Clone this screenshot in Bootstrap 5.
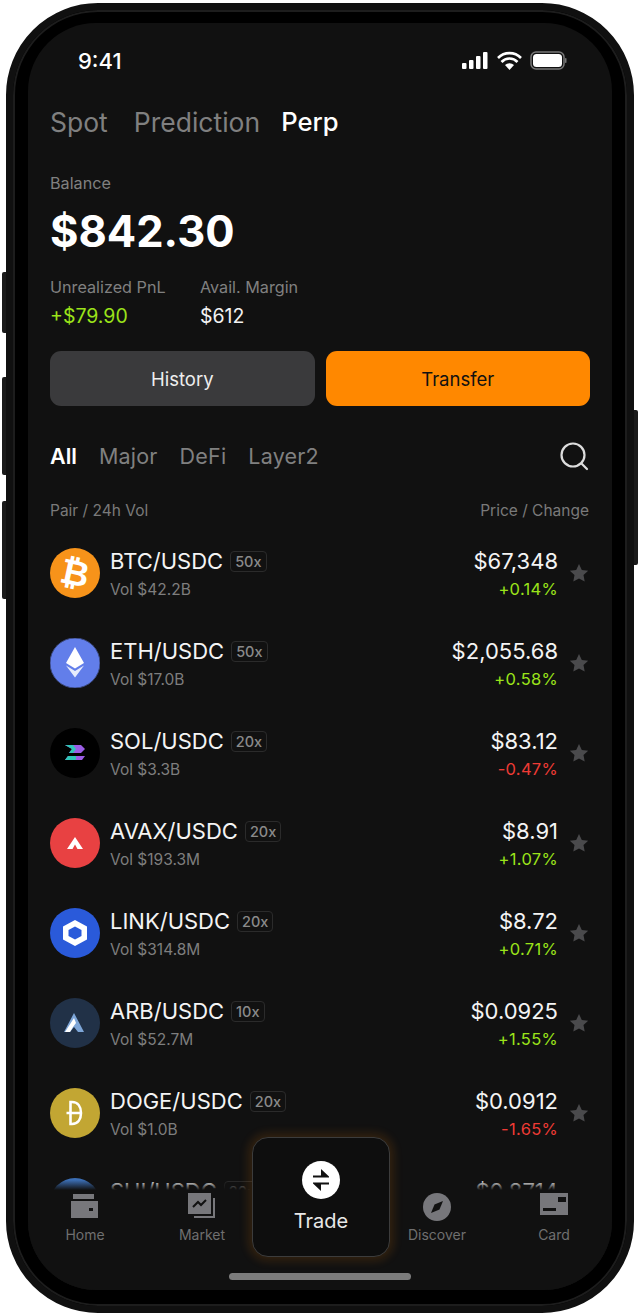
<!DOCTYPE html>
<html lang="en">
<head>
    <meta charset="UTF-8">
    <meta name="viewport" content="width=device-width, initial-scale=1.0">
    <title>Perp</title>
    <link href="https://cdn.jsdelivr.net/npm/bootstrap@5.3.0/dist/css/bootstrap.min.css" rel="stylesheet">
    <style>
        html, body { background: #fff; margin: 0; height: 1316px; overflow: hidden; }
        body { font-family: Inter, "Liberation Sans", sans-serif; color: #f2f2f2; }
        .phone-wrap { position: relative; width: 640px; height: 1316px; padding: 3px 6px; }
        .side-key { position: absolute; background: #1a1a1a; border-radius: 2px; width: 6px; }
        .key-a { left: 2px; top: 272px; height: 61px; }
        .key-b { left: 2px; top: 377px; height: 98px; }
        .key-c { left: 2px; top: 501px; height: 98px; }
        .key-d { left: 632px; top: 410px; height: 155px; }
        .phone-body { position: relative; height: 1310px; background: #000; border-radius: 92px; padding: 13px 15px 16px; border: 7px solid #101010; box-shadow: inset 0 0 0 2px #1d1d1d; }
        .phone-screen { position: relative; height: 100%; background: #111; border-radius: 68px; overflow: hidden; padding: 0 22px; }
        .status-row { height: 36px; margin-top: 20px; padding: 0 23px 0 28px; font-size: 22px; font-weight: 500; line-height: 36px; color: #fff; }
        .top-tabs { margin-top: 25px; }
        .top-tab { font-size: 26.500px; font-weight: 400; color: #808080; line-height: 36px; }
        .top-tab.on { color: #fff; font-weight: 500; font-size: 25.600px; margin-left: -3px; }
        .tab-spot { margin-right: 2px; }
        .caption { font-size: 16.200px; color: #808080; line-height: 20px; }
        .balance-cap { margin-top: 33px; }
        .balance { font-size: 43.500px; font-weight: 700; line-height: 56px; color: #fff; margin-top: 10px; }
        .stats { margin-top: 18px; }
        .stat-left { width: 150px; }
        .stat-val { font-size: 19.500px; line-height: 26px; color: #f2f2f2; margin-top: 6px; }
        .up { color: #9be31a; }
        .down { color: #ee3b35; }
        .actions { margin-top: 22px; gap: 11px; }
        .act-btn { height: 55px; border-radius: 11px; font-size: 18.500px; font-weight: 400; line-height: 1; border: 0; padding: 1px 0 0; }
        .act-btn.grey, .act-btn.grey:hover { background: #3a3a3c; color: #eee; }
        .act-btn.orange, .act-btn.orange:hover { background: #ff8800; color: #111; }
        .filters { margin-top: 35px; padding-right: 1px; gap: 22px; }
        .filter-tab { font-size: 21.500px; line-height: 28px; color: #808080; letter-spacing: .2px; }
        .filter-tab.on { color: #fff; font-weight: 600; letter-spacing: 0; }
        .head-row { font-size: 15.500px; line-height: 20px; color: #7a7a7a; padding-right: 1px; margin-top: 30px; }
        .pair-list { height: 663px; margin-top: 6px; overflow: hidden; }
        .pair-row { height: 90px; padding-top: 20px; }
        .coin { width: 50px; height: 50px; flex: none; margin: 1px 10px 0 0; }
        .pair-name { font-size: 22px; line-height: 28px; color: #f4f4f4; white-space: nowrap; }
        .lev { font-size: 14.500px; font-weight: 500; line-height: 19px; color: #8a8a8a; border: 1px solid #2b2b2b; border-radius: 4px; padding: 0 4px; margin-left: 7px; }
        .pair-vol { font-size: 15.500px; line-height: 22px; color: #7e7e7e; white-space: nowrap; margin-top: 4px; }
        .pair-price { font-size: 22px; line-height: 28px; color: #f4f4f4; }
        .pair-chg { font-size: 16.500px; line-height: 22px; letter-spacing: .3px; margin-top: 3px; }
        .star { width: 20px; height: 20px; margin: 16px 1px 0 11px; flex: none; }
        .tab-bar { position: absolute; left: 0; right: 0; bottom: 0; height: 100px; background: #111; }
        .tab-bar::before { content: ""; position: absolute; left: 0; right: 0; top: -10px; height: 10px; background: linear-gradient(rgba(17,17,17,0), #111); }
        .tab-item { position: absolute; top: 2px; width: 100px; font-size: 14px; line-height: 18px; color: #6f6f6f; text-align: center; }
        .tab-item svg { display: block; margin: 1px auto 3px; width: 30px; height: 30px; }
        .tab-home { left: 7px; }
        .tab-market { left: 124px; }
        .tab-discover { left: 359px; }
        .tab-card { left: 476px; }
        .trade-btn { position: absolute; left: 224px; bottom: 33px; width: 138px; height: 120px; background: #0e0e0e; border: 1px solid #3c3c3c; border-radius: 16px; box-shadow: 0 0 10px 4px rgba(255,136,0,.14); font-size: 20px; line-height: 26px; color: #e8e8e8; text-align: center; padding-top: 23px; }
        .trade-btn svg { display: block; margin: 0 auto 9px; width: 38px; height: 38px; }
        .home-bar { position: absolute; left: 201px; bottom: 10px; width: 182px; height: 7px; background: #7c7c7c; border-radius: 4px; }
    </style>
</head>
<body>
    <div class="phone-wrap">
        <div class="side-key key-a"></div>
        <div class="side-key key-b"></div>
        <div class="side-key key-c"></div>
        <div class="side-key key-d"></div>
        <div class="phone-body">
            <div class="phone-screen">
                <div class="status-row d-flex align-items-center justify-content-between">
                    <span>9:41</span>
                    <svg width="105" height="20" viewBox="0 0 105 20" fill="#fff">
                        <rect x="0" y="12" width="4.500" height="6" rx="1"/>
                        <rect x="7" y="9" width="4.500" height="9" rx="1"/>
                        <rect x="14" y="5" width="4.500" height="13" rx="1"/>
                        <rect x="21" y="1" width="4.500" height="17" rx="1"/>
                        <path d="M36 7a16 16 0 0 1 23 0M39.500 11a11 11 0 0 1 16 0" fill="none" stroke="#fff" stroke-width="2.600"/>
                        <path d="M43 14a6.500 6.500 0 0 1 9 0l-4.500 5z"/>
                        <rect x="69" y="1" width="33" height="17" rx="5" fill="none" stroke="#777" stroke-width="1.500"/>
                        <rect x="71" y="3" width="29" height="13" rx="3.500"/>
                        <rect x="103" y="7" width="1.500" height="5" rx=".7" fill="#777"/>
                    </svg>
                </div>
                <div class="top-tabs d-flex gap-4">
                    <span class="top-tab tab-spot">Spot</span>
                    <span class="top-tab">Prediction</span>
                    <span class="top-tab on">Perp</span>
                </div>
                <div class="caption balance-cap">Balance</div>
                <div class="balance">$842.30</div>
                <div class="stats d-flex">
                    <div class="stat-left">
                        <div class="caption">Unrealized PnL</div>
                        <div class="stat-val up">+$79.90</div>
                    </div>
                    <div>
                        <div class="caption">Avail. Margin</div>
                        <div class="stat-val">$612</div>
                    </div>
                </div>
                <div class="actions d-flex">
                    <button class="btn act-btn grey w-50">History</button>
                    <button class="btn act-btn orange w-50">Transfer</button>
                </div>
                <div class="filters d-flex align-items-center">
                    <span class="filter-tab on">All</span>
                    <span class="filter-tab">Major</span>
                    <span class="filter-tab">DeFi</span>
                    <span class="filter-tab">Layer2</span>
                    <svg class="ms-auto" width="30" height="30" viewBox="0 0 30 30" fill="none" stroke="#ddd" stroke-width="2.200" stroke-linecap="round"><circle cx="14" cy="14" r="11.500"/><path d="M23 23l5 5"/></svg>
                </div>
                <div class="head-row d-flex justify-content-between">
                    <span>Pair / 24h Vol</span>
                    <span>Price / Change</span>
                </div>
                <div class="pair-list" id="pairList"></div>
                <div class="tab-bar">
                    <div class="tab-item tab-home">
                        <svg viewBox="0 0 30 30" fill="#77777b"><rect x="3" y="1" width="21" height="5"/><path d="M1 8h27v17H1zM19 15v3h4v-3z" fill-rule="evenodd"/></svg>
                        Home
                    </div>
                    <div class="tab-item tab-market">
                        <svg viewBox="0 0 30 30" fill="#77777b"><path d="M26 5h2v20H7v-2h19z"/><path d="M1 0h23v21H1z"/><path d="M6 14l5-5 3 3 5-5" fill="none" stroke="#111" stroke-width="2"/></svg>
                        Market
                    </div>
                    <div class="trade-btn">
                        <svg viewBox="0 0 38 38"><circle cx="19" cy="19" r="19" fill="#fff"/><path d="M19 8l8 7.500v1H11v-2h8zM19 30l-8-7.500v-1h16v2h-8z" fill="#111"/></svg>
                        Trade
                    </div>
                    <div class="tab-item tab-discover">
                        <svg viewBox="0 0 30 30"><circle cx="15" cy="14" r="14" fill="#77777b"/><path d="M21 8l-8.500 3.500L9 20l8.500-3.500z" fill="#111"/></svg>
                        Discover
                    </div>
                    <div class="tab-item tab-card">
                        <svg viewBox="0 0 30 30" fill="#77777b"><path fill-rule="evenodd" d="M1 0h28v22H1zM19 4v5h8V4zM4 15v3h13v-3z"/></svg>
                        Card
                    </div>
                    <div class="home-bar"></div>
                </div>
            </div>
        </div>
    </div>
    <script>
        const coins = {
            btc: `<circle cx="25" cy="25" r="25" fill="#f7931a"/><text x="25" y="37" font-family="Liberation Sans" font-weight="700" font-size="35" fill="#fff" text-anchor="middle" transform="rotate(12 25 25)">₿</text>`,
            eth: `<circle cx="25" cy="25" r="25" fill="#627eea" stroke="#3c4a80"/><path d="M25 9l-9 16 9 5.500 9-5.500z" fill="#fff"/><path d="M16 27.500l9 12 9-12-9 5.500z" fill="#fff" opacity=".85"/>`,
            sol: `<circle cx="25" cy="25" r="25" fill="#000"/><path d="M15 17h16l4 4-4 4H19l3-4z" fill="#9b5de5"/><path d="M15 17h8l3 4-3 4h-4l3-4z" fill="#2fc6b8"/><path d="M18 28h17l-3 4H15z" fill="#9b5de5"/><path d="M18 28h8v4H15z" fill="#2fc6b8"/>`,
            avax: `<circle cx="25" cy="25" r="25" fill="#e84142"/><path d="M25 19l8 12h-5.500L25 26.500 22.500 31H17z" fill="#fff"/>`,
            link: `<circle cx="25" cy="25" r="25" fill="#2a5ada"/><path d="M25 12l12 6.500v13L25 38l-12-6.500v-13zm0 6.500l-6.500 3.500v6l6.500 3.500 6.500-3.500v-6z" fill="#fff" fill-rule="evenodd"/>`,
            arb: `<circle cx="25" cy="25" r="25" fill="#213147"/><path d="M24 15l10 19h-6l-4-5-4 5h-6z" fill="#7ea6d8"/><path d="M24 20l2 5-3 4-3 5h-5z" fill="#fff"/>`,
            doge: `<circle cx="25" cy="25" r="25" fill="#c2a633"/><path d="M20.500 14h1.500c6 0 9 5 9 11s-3 11-9 11h-1.500zM16.500 25h15" fill="none" stroke="#fff" stroke-width="2.600"/>`,
            sui: `<circle cx="25" cy="25" r="25" fill="#3c6fb5"/>`
        };
        const pairs = [
            ['btc', 'BTC/USDC', '50x', '$42.2B', '$67,348', '+0.14%'],
            ['eth', 'ETH/USDC', '50x', '$17.0B', '$2,055.68', '+0.58%'],
            ['sol', 'SOL/USDC', '20x', '$3.3B', '$83.12', '-0.47%'],
            ['avax', 'AVAX/USDC', '20x', '$193.3M', '$8.91', '+1.07%'],
            ['link', 'LINK/USDC', '20x', '$314.8M', '$8.72', '+0.71%'],
            ['arb', 'ARB/USDC', '10x', '$52.7M', '$0.0925', '+1.55%'],
            ['doge', 'DOGE/USDC', '20x', '$1.0B', '$0.0912', '-1.65%'],
            ['sui', 'SUI/USDC', '20x', '$1.1B', '$0.8714', '+0.32%']
        ];
        document.getElementById('pairList').innerHTML = pairs.map(p => `
            <div class="pair-row d-flex align-items-start">
                <svg class="coin" viewBox="0 0 50 50">${coins[p[0]]}</svg>
                <div class="me-auto">
                    <div class="d-flex align-items-center"><span class="pair-name">${p[1]}</span><span class="lev">${p[2]}</span></div>
                    <div class="pair-vol">Vol ${p[3]}</div>
                </div>
                <div class="text-end">
                    <div class="pair-price">${p[4]}</div>
                    <div class="pair-chg ${p[5][0] === '+' ? 'up' : 'down'}">${p[5]}</div>
                </div>
                <svg class="star" viewBox="0 0 20 20" fill="#4a4a4c"><path d="M10 1l2.800 5.900 6.400.8-4.700 4.400 1.200 6.400L10 15.400l-5.700 3.100 1.200-6.400L.8 7.700l6.400-.8z"/></svg>
            </div>`).join('');
    </script>
</body>
</html>
